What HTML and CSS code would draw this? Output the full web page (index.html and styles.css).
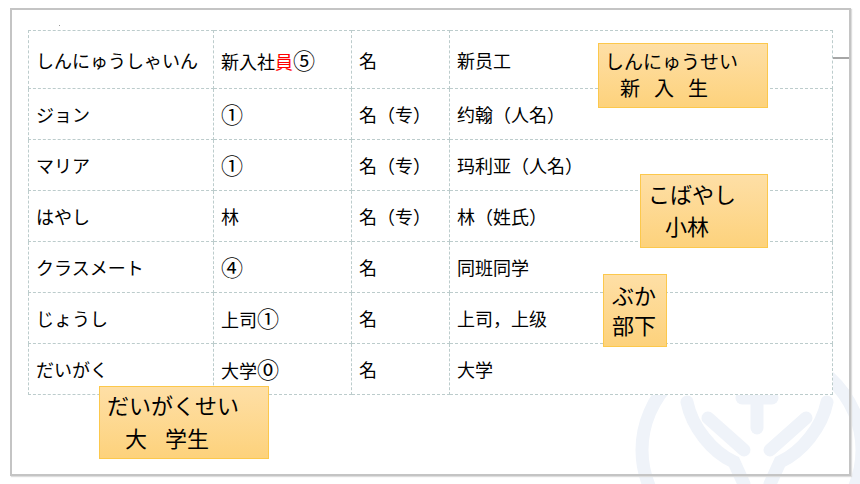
FILE: index.html
```html
<!DOCTYPE html>
<html>
 <head>
  <meta charset="utf-8">
  <title>新出単語</title>
  <link rel="stylesheet" href="styles.css">
 </head>
 <body>
  <svg class="watermark" width="230" height="154" viewBox="0 0 230 154">
   <g fill="none" stroke="#eff3f9" stroke-width="13" stroke-linecap="round">
    <ellipse cx="122" cy="120" rx="110" ry="102"/>
    <path d="M57 72 C 62 97, 82 122, 104 132 L 114 154"/>
    <path d="M78 88 L 114 120"/>
    <path d="M197 72 C 192 97, 172 122, 150 132 L 140 154"/>
    <path d="M176 88 L 140 120"/>
    <path d="M127 70 L 127 98"/>
    <path d="M112 68 L 142 68"/>
   </g>
  </svg>
  <div class="slide">
   <span class="speck"></span>
   <span class="connector"></span>
   <table class="words">
    <colgroup>
     <col class="c1"><col class="c2"><col class="c3"><col class="c4">
    </colgroup>
    <tr class="first">
     <td>しんにゅうしゃいん</td>
     <td>新入社<span class="red">員</span><span class="num">⑤</span></td>
     <td>名</td>
     <td>新员工</td>
    </tr>
    <tr>
     <td>ジョン</td>
     <td><span class="num">①</span></td>
     <td>名（专）</td>
     <td>约翰（人名）</td>
    </tr>
    <tr>
     <td>マリア</td>
     <td><span class="num">①</span></td>
     <td>名（专）</td>
     <td>玛利亚（人名）</td>
    </tr>
    <tr>
     <td>はやし</td>
     <td>林</td>
     <td>名（专）</td>
     <td>林（姓氏）</td>
    </tr>
    <tr>
     <td>クラスメート</td>
     <td><span class="num">④</span></td>
     <td>名</td>
     <td>同班同学</td>
    </tr>
    <tr>
     <td>じょうし</td>
     <td>上司<span class="num">①</span></td>
     <td>名</td>
     <td>上司，上级</td>
    </tr>
    <tr>
     <td>だいがく</td>
     <td>大学<span class="num">⓪</span></td>
     <td>名</td>
     <td>大学</td>
    </tr>
   </table>

   <div class="note n1">
    <div>しんにゅうせい</div>
    <div class="ind1">新<span class="gap">入</span><span class="gap">生</span></div>
   </div>
   <div class="note n2">
    <div>こばやし</div>
    <div class="ind2">小林</div>
   </div>
   <div class="note n3">
    <div>ぶか</div>
    <div>部下</div>
   </div>
   <div class="note n4">
    <div>だいがくせい</div>
    <div class="ind4">大<span class="gap4">学生</span></div>
   </div>
  </div>
 </body>
</html>
```

FILE: styles.css
```css
html, body {
	margin: 0;
	padding: 0;
	background-color: #ffffff;
	overflow: hidden;
}

body {
	width: 860px;
	height: 484px;
	position: relative;
	font-family: "Noto Sans CJK JP", "Noto Sans CJK SC", sans-serif;
	color: #000000;
}

svg.watermark {
	position: absolute;
	left: 630px;
	top: 330px;
}

div.slide {
	position: relative;
	margin-left: 10px;
	margin-top: 8px;
	width: 837px;
	height: 464px;
	border: 2px solid #c4c4c4;
	box-shadow: 1px 1px 1px #dddddd;
	padding: 0;
}

span.speck {
	position: absolute;
	left: 47px;
	top: 15px;
	width: 1px;
	height: 1px;
	background-color: #9a9a9a;
}

span.connector {
	position: absolute;
	left: 820px;
	top: 47px;
	width: 17px;
	height: 2px;
	background-color: #a6a6a6;
}

table.words {
	position: relative;
	margin-left: 16px;
	margin-top: 20px;
	width: 804px;
	border-collapse: collapse;
	table-layout: fixed;
	font-size: 18px;
	background-color: #ffffff;
}

col.c1 {
	width: 185px;
}

col.c2 {
	width: 138px;
}

col.c3 {
	width: 98px;
}

col.c4 {
	width: 383px;
}

table.words td {
	height: 50px;
	padding: 0 0 0 7px;
	border: 1px dashed #bccccc;
	white-space: nowrap;
	line-height: 20px;
	vertical-align: middle;
}

table.words tr.first td {
	height: 57px;
}

span.red {
	color: #ff0000;
}

span.num {
	font-size: 22px;
	line-height: 20px;
}

div.note {
	position: absolute;
	box-sizing: border-box;
	border: 1px solid #fcc84c;
	background: linear-gradient(to bottom, #fedfa6, #fdd27c);
	white-space: nowrap;
}

div.n1 {
	left: 586px;
	top: 33px;
	width: 170px;
	height: 65px;
	padding: 3px 0 0 6px;
	font-size: 19px;
	line-height: 27px;
}

div.ind1 {
	padding-left: 15px;
	font-size: 20px;
}

span.gap {
	margin-left: 14px;
}

div.n2 {
	left: 628px;
	top: 164px;
	width: 128px;
	height: 74px;
	padding: 2px 0 0 7px;
	font-size: 22px;
	line-height: 32px;
}

div.ind2 {
	padding-left: 17px;
}

div.n3 {
	left: 591px;
	top: 264px;
	width: 64px;
	height: 73px;
	padding: 4px 0 0 8px;
	font-size: 22px;
	line-height: 30px;
}

div.n4 {
	left: 87px;
	top: 376px;
	width: 170px;
	height: 73px;
	padding: 1px 0 0 7px;
	font-size: 22px;
	line-height: 33px;
}

div.ind4 {
	padding-left: 18px;
}

span.gap4 {
	margin-left: 18px;
}
```
